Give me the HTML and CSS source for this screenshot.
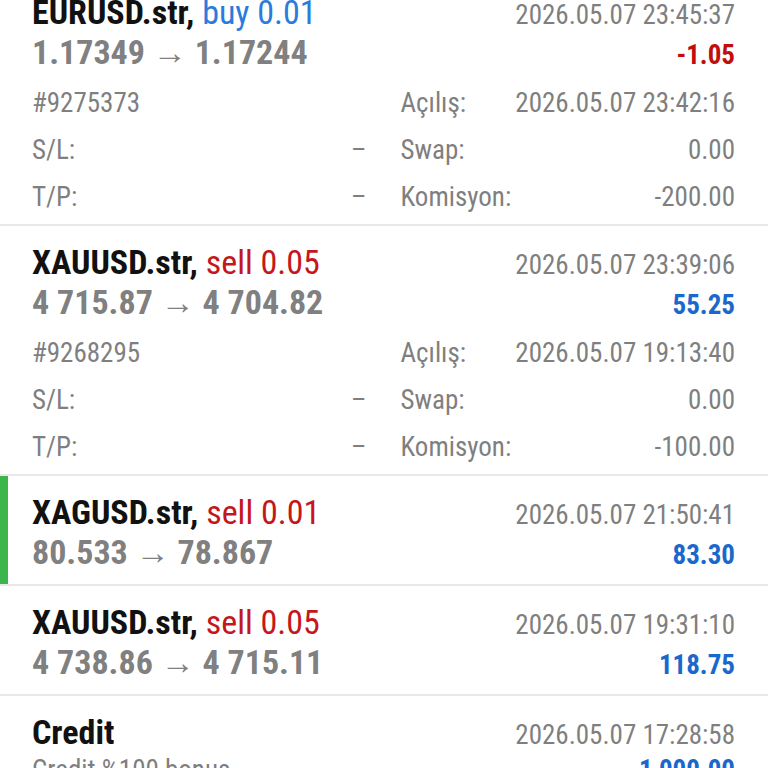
FILE: index.html
```html
<!doctype html>
<html lang="tr">
  <head>
    <meta charset="UTF-8" />
    <meta name="viewport" content="width=device-width, initial-scale=1.0" />
    <title>Geçmiş</title>
    <link rel="stylesheet" href="styles.css">
  </head>
  <body>
    <!-- Trade history list (scrolled a little) -->
    <div class="history">
      <div class="deal expanded">
        <div class="deal-head">
          <div class="deal-title">EURUSD.str, <span class="buy">buy 0.01</span></div>
          <div class="deal-time">2026.05.07 23:45:37</div>
          <div class="deal-price">1.17349 <span class="arrow">→</span> 1.17244</div>
          <div class="deal-profit loss">-1.05</div>
        </div>
        <div class="deal-details">
          <div class="detail"><span>#9275373</span></div>
          <div class="detail"><span>Açılış:</span><span>2026.05.07 23:42:16</span></div>
          <div class="detail"><span>S/L:</span><span>–</span></div>
          <div class="detail"><span>Swap:</span><span>0.00</span></div>
          <div class="detail"><span>T/P:</span><span>–</span></div>
          <div class="detail"><span>Komisyon:</span><span>-200.00</span></div>
        </div>
      </div>

      <div class="deal expanded">
        <div class="deal-head">
          <div class="deal-title">XAUUSD.str, <span class="sell">sell 0.05</span></div>
          <div class="deal-time">2026.05.07 23:39:06</div>
          <div class="deal-price">4 715.87 <span class="arrow">→</span> 4 704.82</div>
          <div class="deal-profit">55.25</div>
        </div>
        <div class="deal-details">
          <div class="detail"><span>#9268295</span></div>
          <div class="detail"><span>Açılış:</span><span>2026.05.07 19:13:40</span></div>
          <div class="detail"><span>S/L:</span><span>–</span></div>
          <div class="detail"><span>Swap:</span><span>0.00</span></div>
          <div class="detail"><span>T/P:</span><span>–</span></div>
          <div class="detail"><span>Komisyon:</span><span>-100.00</span></div>
        </div>
      </div>

      <div class="deal selected">
        <div class="deal-head">
          <div class="deal-title">XAGUSD.str, <span class="sell">sell 0.01</span></div>
          <div class="deal-time">2026.05.07 21:50:41</div>
          <div class="deal-price">80.533 <span class="arrow">→</span> 78.867</div>
          <div class="deal-profit">83.30</div>
        </div>
      </div>

      <div class="deal">
        <div class="deal-head">
          <div class="deal-title">XAUUSD.str, <span class="sell">sell 0.05</span></div>
          <div class="deal-time">2026.05.07 19:31:10</div>
          <div class="deal-price">4 738.86 <span class="arrow">→</span> 4 715.11</div>
          <div class="deal-profit">118.75</div>
        </div>
      </div>

      <div class="deal">
        <div class="deal-head">
          <div class="deal-title">Credit</div>
          <div class="deal-time">2026.05.07 17:28:58</div>
          <div class="deal-comment">Credit %100 bonus</div>
          <div class="deal-profit">1 000.00</div>
        </div>
      </div>
    </div>
  </body>
</html>
```

FILE: styles.css
```css
* {
  margin: 0;
  padding: 0;
  box-sizing: border-box;
}

body {
  font-family: "Roboto Condensed", "Roboto", sans-serif;
  font-stretch: condensed;
  background: #fff;
  color: #7f7f7f;
  overflow: hidden;
  height: 100vh;
}

/* list is scrolled, first row partly hidden */
.history {
  margin-top: -24px;
}

.deal {
  padding: 16px 33px 12px 32px;
  border-bottom: 2px solid #e8e8e8;
}

.deal.expanded {
  padding-bottom: 3px;
}

.deal.selected {
  box-shadow: inset 8px 0 0 #3cb64b;
}

.deal-head {
  display: grid;
  grid-template-columns: 1fr auto;
  grid-auto-rows: 40px;
  align-items: baseline;
}

.deal-title {
  font-size: 34px;
  line-height: 40px;
  font-weight: 700;
  color: #111;
}

.deal-title span {
  font-weight: 400;
}

.buy {
  color: #2b7bdc;
}

.sell {
  color: #c4161c;
}

.deal-time {
  font-size: 27px;
  line-height: 36px;
  text-align: right;
}

.deal-price {
  font-size: 34px;
  line-height: 40px;
  font-weight: 700;
  color: #808080;
}

.deal-price .arrow {
  font-weight: 400;
}

.deal-comment {
  font-size: 27px;
  line-height: 36px;
}

.deal-profit {
  font-size: 27px;
  line-height: 36px;
  font-weight: 700;
  text-align: right;
  color: #1a68cc;
}

.deal-profit.loss {
  color: #c00d0d;
}

/* Extra info of an opened row */
.deal-details {
  display: grid;
  grid-template-columns: 1fr 1fr;
  column-gap: 34px;
  margin-top: 8px;
  font-size: 27px;
  line-height: 47px;
}

.detail {
  display: flex;
  justify-content: space-between;
}
```
